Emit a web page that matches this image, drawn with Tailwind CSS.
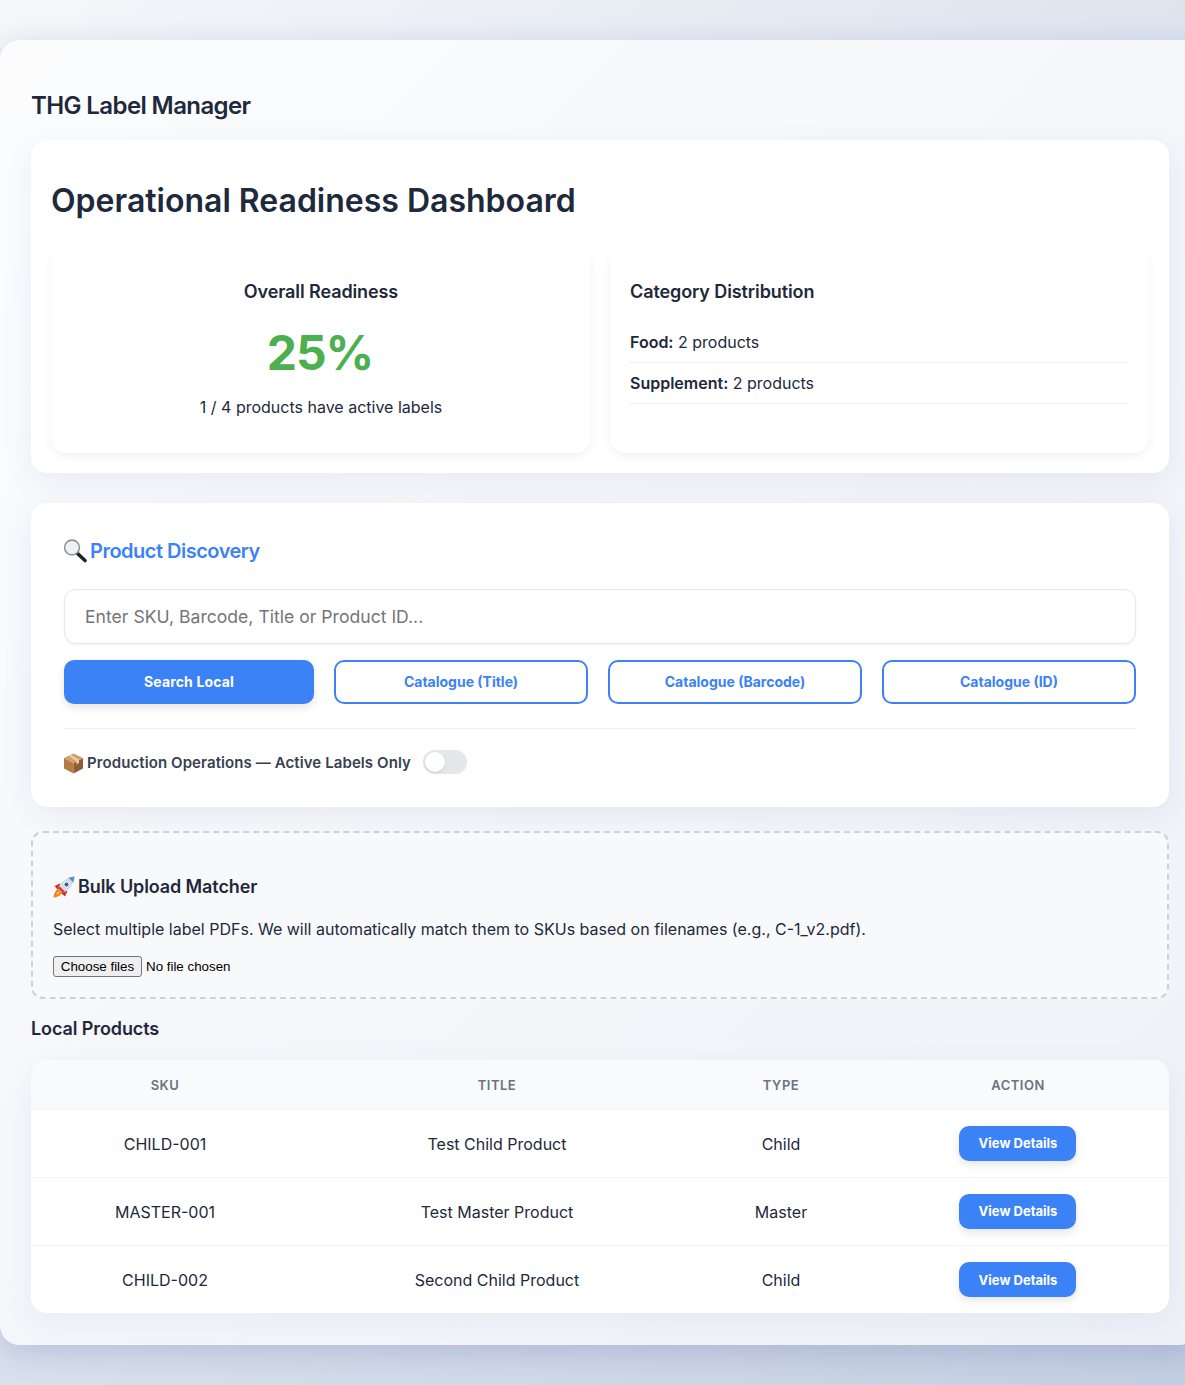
<!DOCTYPE html>
<html lang="en">
<head>
  <meta charset="UTF-8">
  <title>THG Label Manager</title>
  <script src="https://cdn.jsdelivr.net/npm/@tailwindcss/browser@4"></script>
</head>
<body class="overflow-hidden font-['Inter','Noto_Sans',sans-serif] text-[#1e293b]">
  <div class="h-[1385px] w-[1185px] overflow-hidden bg-linear-[135deg,#f5f7fa_0%,#c3cfe2_100%] pt-10">
    <div class="h-[1305px] w-[1200px] rounded-[20px] bg-white/70 px-[31px] pt-[47px] shadow-[0_8px_32px_rgba(31,38,135,0.18)]">
      <h1 class="h-[53px] text-2xl leading-[38px] font-semibold tracking-[-0.6px]">THG Label Manager</h1>

      <!-- Readiness -->
      <section class="h-[333px] rounded-2xl bg-white px-5 pt-[38px] shadow-[0_8px_32px_rgba(31,38,135,0.07)]">
        <h2 class="text-[32px] leading-[46px] font-semibold">Operational Readiness Dashboard</h2>
        <div class="mt-[23px] grid grid-cols-[540px_539px] gap-[19px]">
          <div class="h-[206px] rounded-2xl bg-white p-5 text-center shadow-[0_4px_10px_rgba(0,0,0,0.05)]">
            <h3 class="mt-[10px] text-lg leading-[30px] font-semibold tracking-[-0.1px]">Overall Readiness</h3>
            <div class="mt-[17px] pr-0.5 text-5xl leading-[58px] font-bold tracking-[-1px] text-[#4caf50]">25%</div>
            <p class="mt-[13px] leading-6">1 / 4 products have active labels</p>
          </div>
          <div class="h-[206px] rounded-2xl bg-white py-5 pr-[21px] pl-5 shadow-[0_4px_10px_rgba(0,0,0,0.05)]">
            <h3 class="mt-[10px] text-lg leading-[30px] font-semibold tracking-[-0.1px]">Category Distribution</h3>
            <div class="mt-[15px] h-[41px] border-b border-[#eeeeee] pt-2 leading-6"><strong class="font-semibold">Food:</strong> 2 products</div>
            <div class="h-[41px] border-b border-[#eeeeee] pt-2 leading-6"><strong class="font-semibold">Supplement:</strong> 2 products</div>
          </div>
        </div>
      </section>

      <!-- Search -->
      <section class="mt-[30px] h-[304px] rounded-2xl bg-white px-[33px] pt-[33px] shadow-[0_8px_32px_rgba(31,38,135,0.07)]">
        <h3 class="flex items-center text-xl leading-[30px] font-semibold tracking-[-0.5px] text-[#3b82f6]">
          <svg class="mr-[3px] -ml-px" width="24" height="24" viewBox="0 0 24 24">
            <line x1="14" y1="14" x2="22" y2="21.5" stroke="#222" stroke-width="3.6" stroke-linecap="round"/>
            <circle cx="9" cy="8.5" r="7.4" fill="#eef2f5" stroke="#8d959c" stroke-width="1.6"/>
          </svg>
          Product Discovery
        </h3>
        <input type="text" placeholder="Enter SKU, Barcode, Title or Product ID..." class="mt-[23px] h-[55px] w-full rounded-xl border border-[#e5e7eb] bg-white px-5 text-[17.6px] text-[#1e293b] shadow-[0_1px_3px_rgba(0,0,0,0.05)] placeholder:text-[#757575]">
        <div class="mt-4 flex gap-5">
          <button class="h-11 w-[250px] rounded-[10px] bg-[#3b82f6] text-sm font-bold tracking-[0.15px] text-white shadow-[0_4px_8px_rgba(0,0,0,0.1)]">Search Local</button>
          <button class="h-11 w-[254px] rounded-[10px] border-2 border-[#3b82f6] bg-white text-sm font-bold text-[#3b82f6]">Catalogue (Title)</button>
          <button class="h-11 w-[254px] rounded-[10px] border-2 border-[#3b82f6] bg-white text-sm font-bold text-[#3b82f6]">Catalogue (Barcode)</button>
          <button class="h-11 w-[254px] rounded-[10px] border-2 border-[#3b82f6] bg-white text-sm font-bold text-[#3b82f6]">Catalogue (ID)</button>
        </div>
        <div class="mt-6 flex h-[46px] items-center gap-3 border-t border-[#f0f0f0] pt-[21px]">
          <span class="flex items-center pt-0.5 text-[15px] font-semibold tracking-[0.09px] text-[#374151]">
            <svg class="mr-[3px] -ml-px" width="21" height="21" viewBox="0 0 21 21">
              <polygon points="1,5 10.5,10 10.5,20.5 1,15.5" fill="#b27c47"/>
              <polygon points="20,5 10.5,10 10.5,20.5 20,15.5" fill="#8e5e33"/>
              <polygon points="10.5,0.5 20,5 10.5,10 1,5" fill="#cf9f69"/>
              <polygon points="5.5,2.8 8,1.7 16,6.8 16,10 13.5,11.4 13.5,8.4" fill="#e6cfa9"/>
            </svg>
            Production Operations — Active Labels Only
          </span>
          <span class="relative block h-6 w-11 rounded-full bg-[#e5e7eb]">
            <span class="absolute top-0.5 left-0.5 size-5 rounded-full bg-white shadow-sm"></span>
          </span>
        </div>
      </section>

      <!-- Bulk upload -->
      <section class="mt-6 h-[168px] rounded-xl border-2 border-dashed border-[#d1d1d1] bg-[#f8f9fb] px-5 pt-[39px]">
        <h3 class="flex items-center text-lg leading-[30px] font-semibold tracking-[-0.1px]">
          <svg class="mr-[3px]" width="22" height="22" viewBox="0 0 22 22">
            <path d="M0.5 21.5 C1 17 2.5 14.5 5.5 13 L9 16.5 C7.5 19.5 5 21 0.5 21.5Z" fill="#f0801a"/>
            <path d="M3 19 C3.5 17.3 4.5 16 6 15.2 L6.8 16 C6 17.5 4.8 18.5 3 19Z" fill="#ffd23f"/>
            <path d="M7 7.5 L1.5 10 L4.5 13.5 L8.5 12Z" fill="#d62c24"/>
            <path d="M14.5 15 L12 20.5 L8.5 17.5 L10 13.5Z" fill="#d62c24"/>
            <path d="M5 12 C8 5.5 13.5 1.5 21.5 0.5 C20.5 8.5 16.5 14 10 17Z" fill="#d3dce6"/>
            <path d="M15.5 1.8 C17.5 1.1 19.5 0.7 21.5 0.5 C21.3 2.5 20.9 4.5 20.2 6.5Z" fill="#5d8fc9"/>
            <path d="M6.5 10.2 L11.8 15.5 L10 17 L5 12Z" fill="#c9382e"/>
            <circle cx="13.5" cy="8.5" r="2.5" fill="#2f63a8" stroke="#f2f5f8" stroke-width="1"/>
          </svg>
          Bulk Upload Matcher
        </h3>
        <p class="mt-[15px] leading-6">Select multiple label PDFs. We will automatically match them to SKUs based on filenames (e.g., C-1_v2.pdf).</p>
        <div class="mt-[15px] flex items-center font-['Liberation_Sans',sans-serif] text-[13.33px]">
          <button class="h-[21px] w-[89px] rounded-[3px] border border-[#767676] bg-[#efefef] text-[13.33px] text-black">Choose files</button>
          <span class="ml-1 text-black">No file chosen</span>
        </div>
      </section>

      <h3 class="mt-[15px] text-lg leading-[30px] font-semibold tracking-[-0.1px]">Local Products</h3>

      <!-- Products -->
      <div class="mt-4 overflow-hidden rounded-2xl bg-white shadow-[0_8px_32px_rgba(31,38,135,0.05)]">
        <table class="w-[1138px] table-fixed text-center">
          <thead>
            <tr class="h-[49px] border-b border-[#f3f4f6] bg-[#f9fafb] text-[13px] tracking-[0.5px] text-[#6b7280]">
              <th class="w-[268px] pt-0.5 font-semibold">SKU</th>
              <th class="w-[396px] pt-0.5 font-semibold">TITLE</th>
              <th class="w-[172px] pt-0.5 font-semibold">TYPE</th>
              <th class="pt-0.5 font-semibold">ACTION</th>
            </tr>
          </thead>
          <tbody>
            <tr class="h-[68px] border-b border-[#f3f4f6]">
              <td class="pt-0.5">CHILD-001</td><td class="pt-0.5">Test Child Product</td><td class="pt-0.5">Child</td>
              <td><button class="mr-0.5 h-[35px] w-[117px] rounded-[10px] bg-[#3b82f6] pt-0.5 pl-0.5 text-[13px] font-bold text-white shadow-[0_4px_8px_rgba(0,0,0,0.1)]">View Details</button></td>
            </tr>
            <tr class="h-[68px] border-b border-[#f3f4f6]">
              <td class="pt-0.5">MASTER-001</td><td class="pt-0.5">Test Master Product</td><td class="pt-0.5">Master</td>
              <td><button class="mr-0.5 h-[35px] w-[117px] rounded-[10px] bg-[#3b82f6] pt-0.5 pl-0.5 text-[13px] font-bold text-white shadow-[0_4px_8px_rgba(0,0,0,0.1)]">View Details</button></td>
            </tr>
            <tr class="h-[68px]">
              <td class="pt-0.5">CHILD-002</td><td class="pt-0.5">Second Child Product</td><td class="pt-0.5">Child</td>
              <td><button class="mr-0.5 h-[35px] w-[117px] rounded-[10px] bg-[#3b82f6] pt-0.5 pl-0.5 text-[13px] font-bold text-white shadow-[0_4px_8px_rgba(0,0,0,0.1)]">View Details</button></td>
            </tr>
          </tbody>
        </table>
      </div>
    </div>
  </div>
</body>
</html>
